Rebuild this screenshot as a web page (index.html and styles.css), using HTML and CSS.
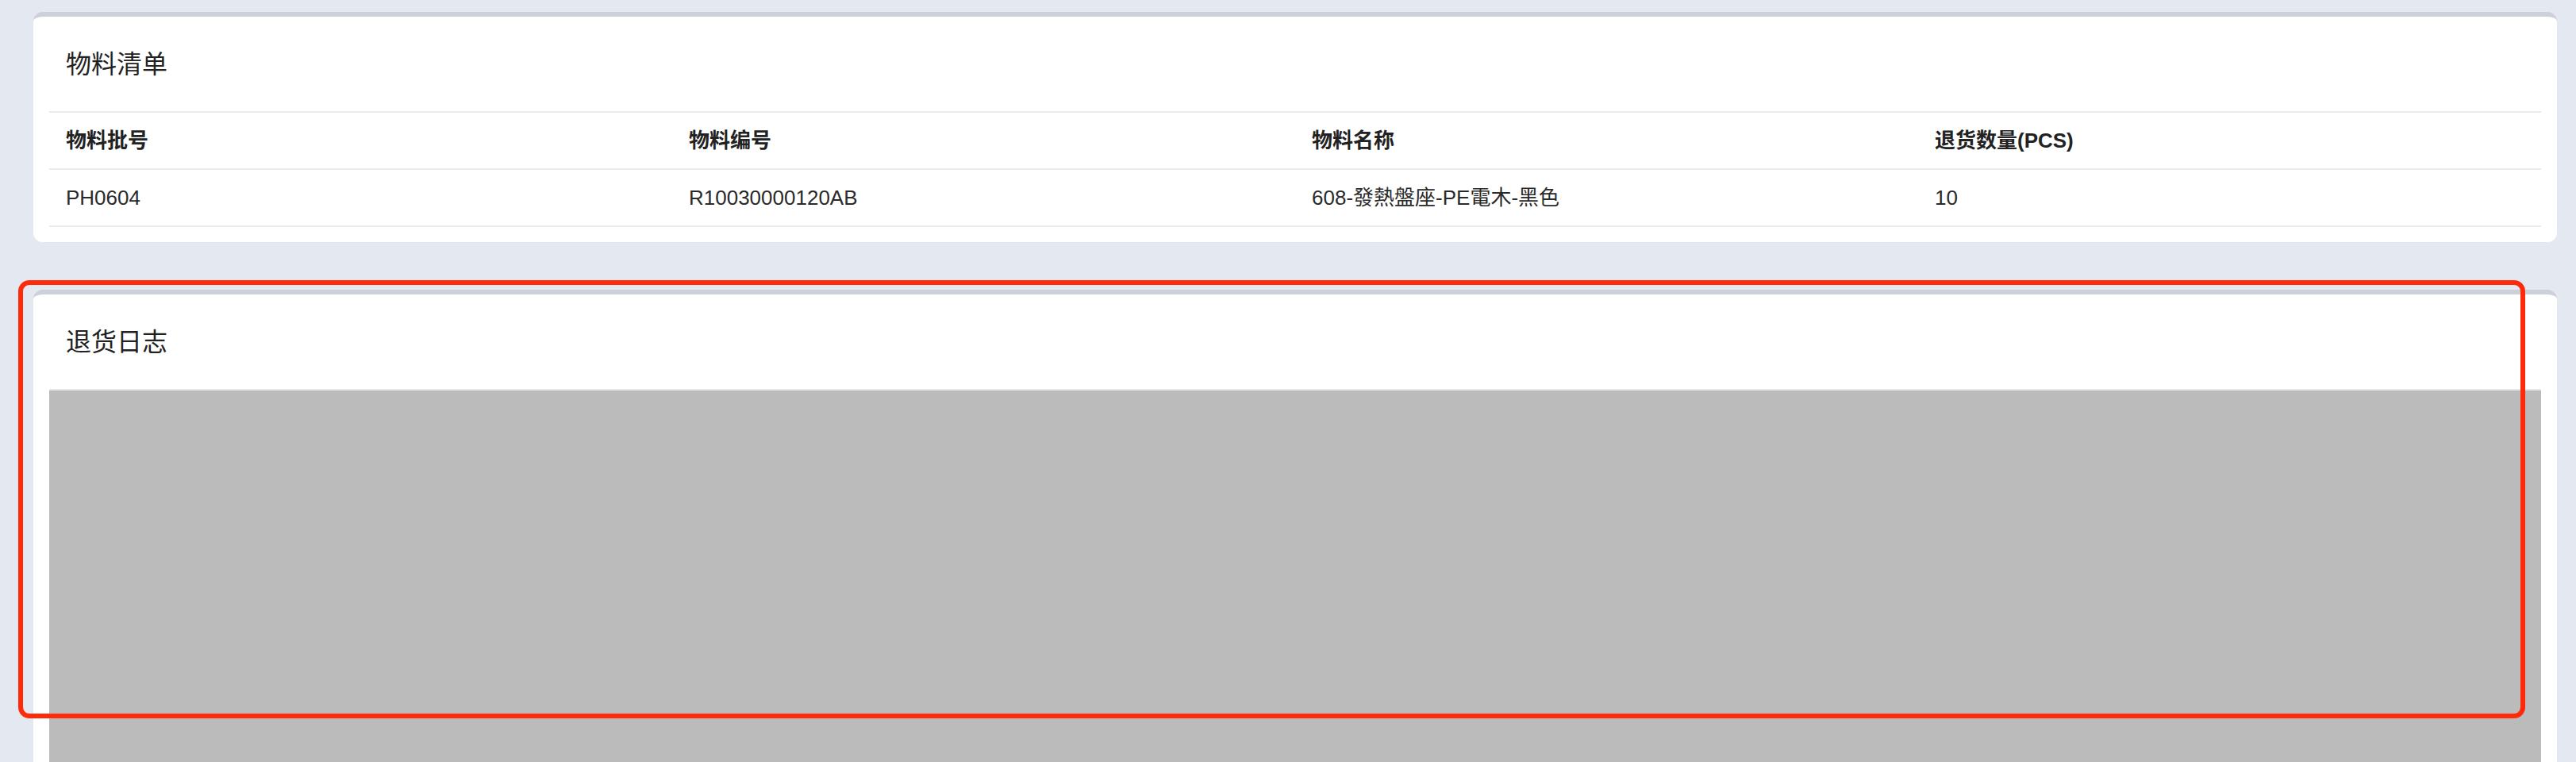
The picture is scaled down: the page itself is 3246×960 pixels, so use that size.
FILE: index.html
```html
<!DOCTYPE html>
<html lang="zh-CN">
<head>
  <meta charset="UTF-8" />
  <meta name="viewport" content="width=device-width, initial-scale=1.0" />
  <title>退货详情</title>
  <link rel="stylesheet" href="styles.css">
</head>
<body>

  <div class="page">
    <div class="card">
      <div class="card-title">物料清单</div>
      <div class="card-body">
        <table class="list">
          <thead>
            <tr>
              <th>物料批号</th>
              <th>物料编号</th>
              <th>物料名称</th>
              <th>退货数量(PCS)</th>
            </tr>
          </thead>
          <tbody>
            <tr>
              <td>PH0604</td>
              <td>R10030000120AB</td>
              <td>608-發熱盤座-PE電木-黑色</td>
              <td>10</td>
            </tr>
          </tbody>
        </table>
      </div>
    </div>

    <div class="card">
      <div class="card-title">退货日志</div>
      <div class="card-body">
        <div class="log-area"></div>
      </div>
    </div>
  </div>

  <!-- annotation frame -->
  <div class="highlight"></div>

</body>
</html>
```

FILE: styles.css
```css
body {
  margin: 0;
  background: #e4e8f0;
  font-family: "Liberation Sans", "Noto Sans CJK SC", sans-serif;
  color: #222;
  overflow: hidden;
}

.page {
  display: flex;
  flex-direction: column;
  gap: 60px;
  padding: 15px 24px 0 42px;
}

.card {
  background: #fff;
  border-top: 6px solid #cbd0d9;
  border-radius: 12px;
}

.card-title {
  height: 119px;
  display: flex;
  align-items: center;
  padding-left: 41px;
  font-size: 32px;
  line-height: 36px;
  color: #222;
}

.card-body {
  padding: 0 20px 19px;
}

.list {
  width: 100%;
  border-collapse: collapse;
  table-layout: fixed;
  font-size: 26px;
  line-height: 30px;
}

.list th,
.list td {
  height: 70px;
  padding: 0 21px;
  text-align: left;
  vertical-align: middle;
  border-top: 2px solid #ebebeb;
  border-bottom: 2px solid #ebebeb;
}

.list th {
  font-weight: bold;
  color: #222;
}

.list td {
  color: #2a2a2a;
}

.log-area {
  height: 640px;
  background: #bbbbbb;
  border-top: 2px solid #e6e6e6;
}

.highlight {
  position: absolute;
  left: 23px;
  top: 353px;
  width: 3159px;
  height: 552px;
  box-sizing: border-box;
  border: 6px solid #ff2a0a;
  border-radius: 14px;
}
```
